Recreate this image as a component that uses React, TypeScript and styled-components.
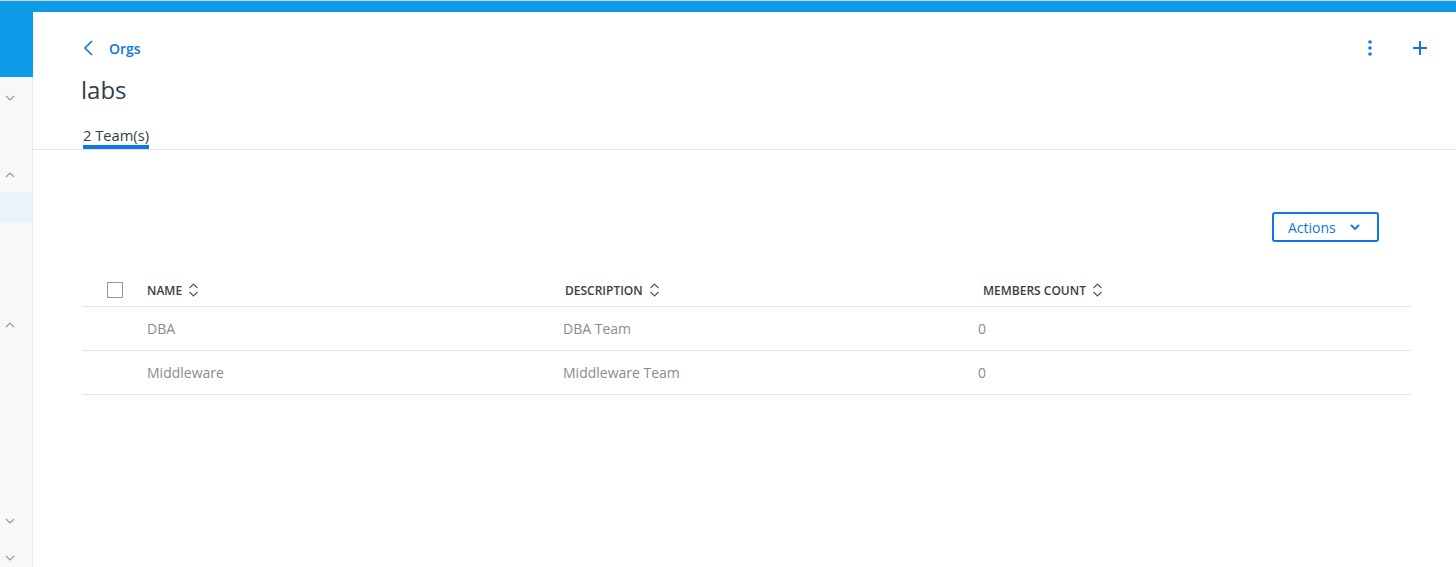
import React from 'react';
import styled, { createGlobalStyle } from 'styled-components';

const GlobalStyle = createGlobalStyle`
    html, body {
        margin: 0;
        padding: 0;
        background: #ffffff;
        font-family: "Open Sans", "Noto Sans", sans-serif;
    }
    * {
        box-sizing: border-box;
    }
`;

const Page = styled.div`
    width: 1456px;
    height: 567px;
    display: flex;
    flex-direction: column;
    overflow: hidden;
`;

const TopBar = styled.div`
    height: 12px;
    flex-shrink: 0;
    background: #0c9be6;
    border-top: 1px solid #c9d3da;
`;

const Body = styled.div`
    flex: 1;
    display: flex;
    min-height: 0;
`;

const Sidebar = styled.div`
    width: 33px;
    flex-shrink: 0;
    background: #f8f8f8;
    border-right: 1px solid #ececec;
    display: flex;
    flex-direction: column;
`;

const SideBrand = styled.div`
    height: 65px;
    background: #0c9be6;
    margin-right: -1px;
`;

const SideChevron = styled.div<{ top: number; selected?: boolean; h?: number }>`
    margin-top: ${p => p.top}px;
    height: ${p => p.h ?? 14}px;
    display: flex;
    align-items: center;
    padding-left: 5px;
    background: ${p => (p.selected ? '#eaf3fc' : 'transparent')};
    color: #9a9a9a;
`;

const Main = styled.div`
    flex: 1;
    display: flex;
    flex-direction: column;
`;

const Header = styled.div`
    padding: 25px 0 0 48px;
    border-bottom: 1px solid #e6e6e6;
    display: flex;
    flex-direction: column;
`;

const HeaderTop = styled.div`
    display: flex;
    align-items: center;
    justify-content: space-between;
    height: 22px;
    padding-right: 28px;
`;

const BackLink = styled.a`
    display: flex;
    align-items: center;
    gap: 16px;
    padding-left: 3px;
    color: #0a78e6;
    font-size: 14px;
    font-weight: 600;
    text-decoration: none;
`;

const HeaderIcons = styled.div`
    display: flex;
    align-items: center;
    gap: 40px;
    color: #0a78e6;
`;

const Title = styled.h1`
    margin: 15px 0 0;
    font-size: 24px;
    font-weight: 400;
    color: #323e48;
    line-height: 32px;
`;

const Tabs = styled.div`
    display: flex;
    margin-top: 19px;
    padding-left: 2px;
`;

const Tab = styled.div<{ active?: boolean }>`
    font-size: 14.7px;
    color: #323e48;
    line-height: 20px;
    border-bottom: 4px solid ${p => (p.active ? '#0a78e6' : 'transparent')};
`;

const Content = styled.div`
    padding: 62px 45px 0 49px;
    display: flex;
    flex-direction: column;
`;

const Toolbar = styled.div`
    display: flex;
    justify-content: flex-end;
    padding-right: 32px;
`;

const ActionsButton = styled.button`
    height: 30px;
    width: 107px;
    border: 2px solid #0a78e6;
    border-radius: 3px;
    background: #ffffff;
    color: #0a78e6;
    font-family: inherit;
    font-size: 14px;
    display: flex;
    align-items: center;
    gap: 14px;
    padding: 0 0 0 14px;
`;

const Table = styled.div`
    margin-top: 34px;
    display: flex;
    flex-direction: column;
`;

const Row = styled.div<{ head?: boolean }>`
    display: grid;
    grid-template-columns: 65px 416px 415px 1fr;
    align-items: center;
    height: ${p => (p.head ? 31 : 44)}px;
    border-bottom: 1px solid #e4e4e4;
`;

const CheckCell = styled.div`
    display: flex;
    padding-left: 25px;
    padding-bottom: 2px;
`;

const Checkbox = styled.span`
    width: 16px;
    height: 16px;
    border: 1px solid #8d99a3;
    background: #fff;
`;

const HeadCell = styled.div<{ offset?: number }>`
    display: flex;
    align-items: center;
    gap: 6px;
    padding-left: ${p => p.offset ?? 0}px;
    font-size: 12px;
    font-weight: 600;
    color: #3d3d3d;
    text-transform: uppercase;
    padding-bottom: 2px;
`;

const Cell = styled.div<{ offset?: number }>`
    font-size: 14px;
    color: #8c8c8c;
    padding-left: ${p => p.offset ?? 0}px;
    padding-bottom: 1px;
`;

const ChevronDown = ({ size = 10, weight = 1.2 }: { size?: number; weight?: number }) => (
    <svg width={size} height={size * 0.6} viewBox="0 0 10 6" fill="none" stroke="currentColor" strokeWidth={weight}>
        <path d="M1 1l4 4 4-4" />
    </svg>
);

const ChevronUp = ({ size = 10 }: { size?: number }) => (
    <svg width={size} height={size * 0.6} viewBox="0 0 10 6" fill="none" stroke="currentColor" strokeWidth="1.2">
        <path d="M1 5l4-4 4 4" />
    </svg>
);

const SortIcon = () => (
    <svg width="11" height="16" viewBox="0 0 11 16" fill="none" stroke="#555" strokeWidth="1.1">
        <path d="M1.5 6l4-4 4 4" />
        <path d="M1.5 10l4 4 4-4" />
    </svg>
);

const BackIcon = () => (
    <svg width="9" height="16" viewBox="0 0 9 16" fill="none" stroke="currentColor" strokeWidth="1.6">
        <path d="M8 1L1 8l7 7" />
    </svg>
);

const KebabIcon = () => (
    <svg width="4" height="16" viewBox="0 0 4 16" fill="currentColor">
        <circle cx="2" cy="2" r="1.8" />
        <circle cx="2" cy="8" r="1.8" />
        <circle cx="2" cy="14" r="1.8" />
    </svg>
);

const PlusIcon = () => (
    <svg width="16" height="16" viewBox="0 0 16 16" fill="none" stroke="currentColor" strokeWidth="2">
        <path d="M8 1v14M1 8h14" />
    </svg>
);

const teams = [
    { name: 'DBA', description: 'DBA Team', members: 0 },
    { name: 'Middleware', description: 'Middleware Team', members: 0 },
];

export default function App() {
    return (
        <Page>
            <GlobalStyle />
            <TopBar />
            <Body>
                <Sidebar>
                    <SideBrand />
                    <SideChevron top={14}><ChevronDown /></SideChevron>
                    <SideChevron top={63}><ChevronUp /></SideChevron>
                    <SideChevron top={10} h={30} selected />
                    <SideChevron top={96}><ChevronUp /></SideChevron>
                    <SideChevron top={182}><ChevronDown /></SideChevron>
                    <SideChevron top={23}><ChevronDown /></SideChevron>
                </Sidebar>
                <Main>
                    <Header>
                        <HeaderTop>
                            <BackLink href="#">
                                <BackIcon />
                                Orgs
                            </BackLink>
                            <HeaderIcons>
                                <KebabIcon />
                                <PlusIcon />
                            </HeaderIcons>
                        </HeaderTop>
                        <Title>labs</Title>
                        <Tabs>
                            <Tab active>2 Team(s)</Tab>
                        </Tabs>
                    </Header>
                    <Content>
                        <Toolbar>
                            <ActionsButton>
                                Actions
                                <ChevronDown size={10} weight={1.8} />
                            </ActionsButton>
                        </Toolbar>
                        <Table>
                            <Row head>
                                <CheckCell><Checkbox /></CheckCell>
                                <HeadCell>Name <SortIcon /></HeadCell>
                                <HeadCell offset={2}>Description <SortIcon /></HeadCell>
                                <HeadCell offset={5}>Members count <SortIcon /></HeadCell>
                            </Row>
                            {teams.map(t => (
                                <Row key={t.name}>
                                    <div />
                                    <Cell>{t.name}</Cell>
                                    <Cell>{t.description}</Cell>
                                    <Cell>{t.members}</Cell>
                                </Row>
                            ))}
                        </Table>
                    </Content>
                </Main>
            </Body>
        </Page>
    );
}
